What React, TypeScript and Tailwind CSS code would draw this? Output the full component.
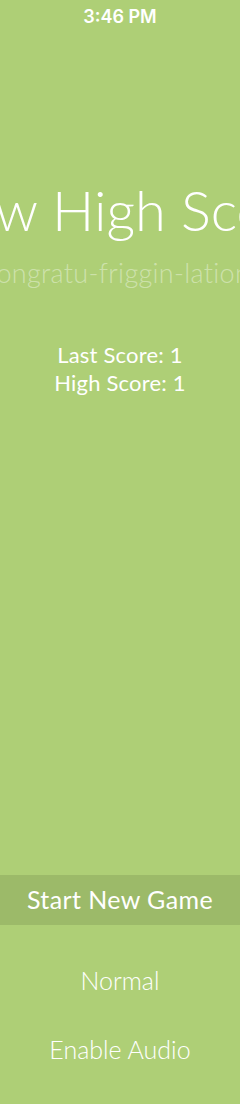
import React from "react";

export default function App() {
  return (
    <div
      className="w-[240px] h-[1104px] bg-[#aecf76] overflow-hidden flex flex-col text-white"
      style={{ fontFamily: "Lato, 'Open Sans', sans-serif" }}
    >
      <div
        className="h-[32px] flex items-center justify-center text-[18px] font-semibold"
        style={{ fontFamily: "Inter, 'Liberation Sans', sans-serif" }}
      >
        3:46 PM
      </div>
      <div className="mt-[146px] flex justify-center whitespace-nowrap text-[56px] font-light leading-[64px]">
        New High Score
      </div>
      <div className="mt-[15px] flex justify-center whitespace-nowrap text-[27px] font-light leading-[32px] tracking-[0.3px] text-white/40">
        Congratu-friggin-lations
      </div>
      <div className="mt-[52px] flex flex-col items-center text-[22px] leading-[28px] tracking-[0.2px]">
        <div>Last Score: 1</div>
        <div>High Score: 1</div>
      </div>
      <div className="mt-[478px] h-[50px] bg-[#9cba69] flex items-center justify-center text-[25px] tracking-[0.4px]">
        Start New Game
      </div>
      <div className="mt-[39px] flex justify-center text-[25px] font-light leading-[32px]">
        Normal
      </div>
      <div className="mt-[37px] flex justify-center text-[25px] font-light leading-[32px]">
        Enable Audio
      </div>
    </div>
  );
}
